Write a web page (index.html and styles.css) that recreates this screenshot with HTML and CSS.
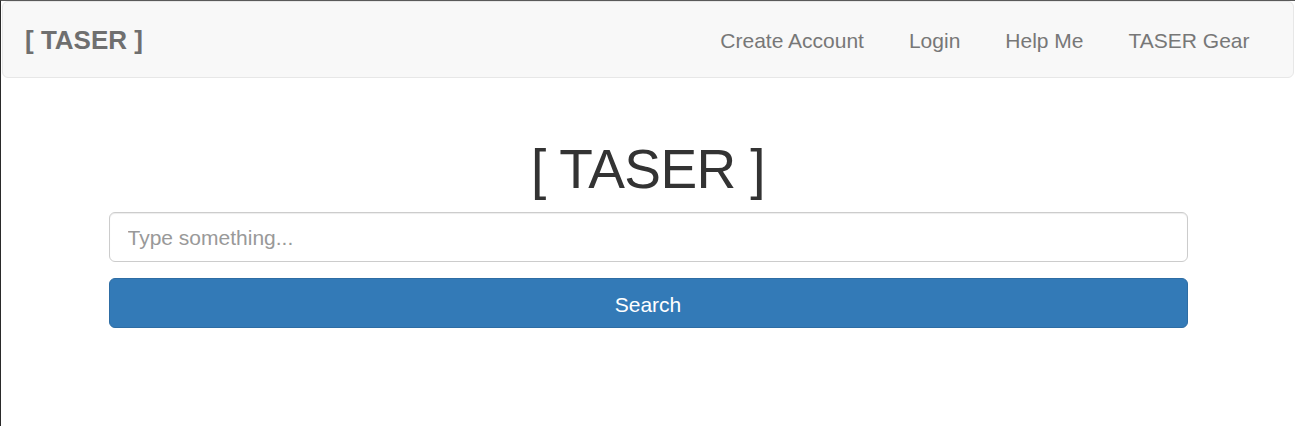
FILE: index.html
```html
<!DOCTYPE html>
<html lang="en">
<head>
<meta charset="utf-8">
<title>[ TASER ]</title>
<link rel="stylesheet" href="styles.css">
</head>
<body>
<div class="frame">
  <nav class="navbar">
    <a class="brand" href="#">[ TASER ]</a>
    <ul class="nav-links">
      <li><a href="#">Create Account</a></li>
      <li><a href="#">Login</a></li>
      <li><a href="#">Help Me</a></li>
      <li><a href="#">TASER Gear</a></li>
    </ul>
  </nav>
  <main class="container">
    <h1 class="title">[ TASER ]</h1>
    <form class="search-form">
      <input class="search-input" type="text" placeholder="Type something...">
      <button class="search-btn" type="button">Search</button>
    </form>
  </main>
</div>
</body>
</html>
```
FILE: styles.css
```css
* { box-sizing: border-box; }
html, body {
  margin: 0;
  padding: 0;
  background: #fff;
}
body {
  font-family: "Liberation Sans", Arial, Helvetica, sans-serif;
  color: #333;
}
.frame {
  min-height: 426px;
  border-top: 1px solid #5a5a5a;
  border-left: 1px solid #2a2a2a;
  padding: 0 1px 0 1px;
}
.navbar {
  display: flex;
  justify-content: space-between;
  align-items: center;
  height: 77px;
  background: #f8f8f8;
  border: 1px solid #e7e7e7;
  border-radius: 6px;
  padding: 2px 21px 0 0;
}
.brand {
  color: #6f6f6f;
  font-size: 26px;
  font-weight: bold;
  text-decoration: none;
  padding: 0 22px;
}
.nav-links {
  list-style: none;
  margin: 0;
  padding: 0;
  display: flex;
}
.nav-links a {
  display: block;
  color: #777;
  font-size: 21px;
  text-decoration: none;
  padding: 0 22.5px;
}
.container {
  width: 1079px;
  margin: 0 auto;
  display: flex;
  flex-direction: column;
  align-items: stretch;
}
.title {
  margin: 61px 0 12px;
  text-align: center;
  font-size: 55px;
  font-weight: normal;
  letter-spacing: -0.6px;
  line-height: 1.1;
  color: #333;
}
.search-form {
  display: flex;
  flex-direction: column;
  gap: 16px;
}
.search-input {
  height: 50px;
  border: 1px solid #ccc;
  border-radius: 6px;
  padding: 2px 18px 0;
  font-family: inherit;
  font-size: 21px;
  color: #555;
  box-shadow: inset 0 1px 1px rgba(0,0,0,0.075);
}
.search-input::placeholder { color: #999; }
.search-btn {
  height: 50px;
  border: 1px solid #2e6da4;
  border-radius: 6px;
  background: #337ab7;
  color: #fff;
  font-family: inherit;
  font-size: 21px;
  padding: 4px 18px 0;
}
```
